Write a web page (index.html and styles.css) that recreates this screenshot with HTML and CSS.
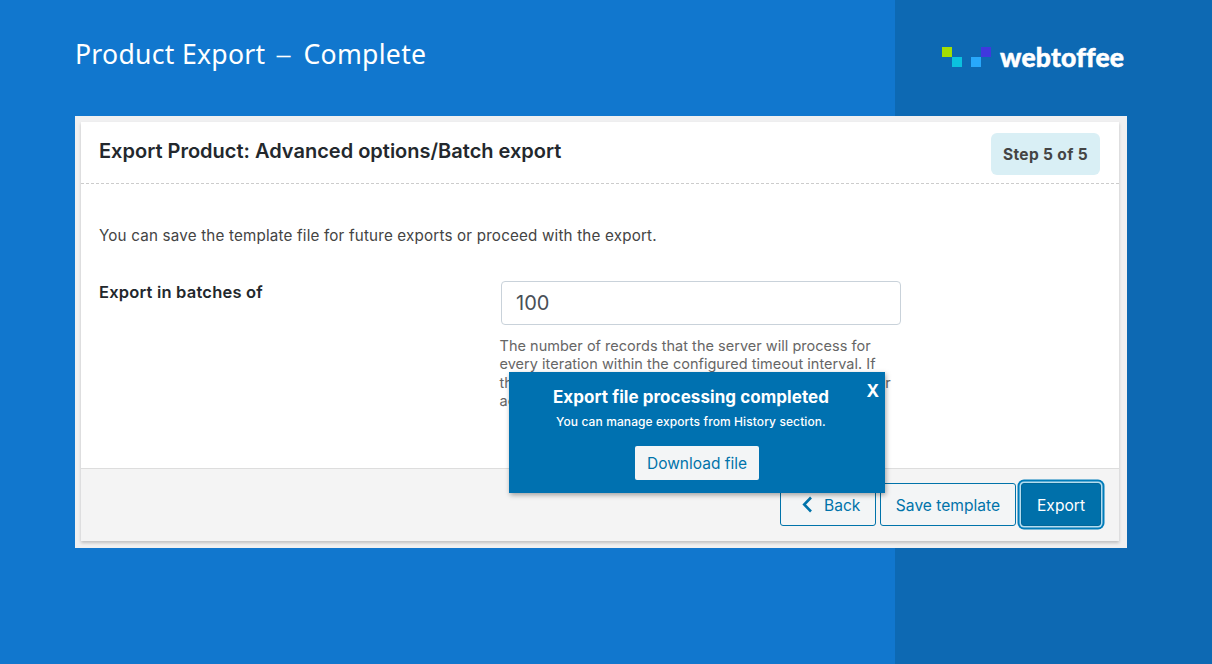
FILE: index.html
```html
<!DOCTYPE html>
<html lang="en">
<head>
<meta charset="utf-8">
<title>Product Export – Complete</title>
<link rel="stylesheet" href="styles.css">
</head>
<body>
<div class="stage">
  <header class="top">
    <h1 class="title">Product Export <span class="dash">–</span> Complete</h1>
    <div class="logo">
      <svg class="logo-mark" width="50" height="20" viewBox="0 0 50 20">
        <rect x="0" y="0" width="10" height="10" fill="#a4de02"/>
        <rect x="10" y="10" width="10" height="10" fill="#0bc1df"/>
        <rect x="29" y="10" width="10" height="10" fill="#28a8fb"/>
        <rect x="39" y="0" width="10" height="10" fill="#4038de"/>
      </svg>
      <span class="logo-name">webtoffee</span>
    </div>
  </header>
  <main class="frame">
    <section class="card">
      <div class="card-head">
        <h2 class="heading">Export Product: Advanced options/Batch export</h2>
        <span class="step">Step 5 of 5</span>
      </div>
      <div class="card-body">
        <p class="intro">You can save the template file for future exports or proceed with the export.</p>
        <div class="field">
          <label class="label" for="batch">Export in batches of</label>
          <div class="control">
            <input class="input" id="batch" type="text" value="100">
            <p class="help">The number of records that the server will process for<br>every iteration within the configured timeout interval. If<br>the export fails due to timeout you can lower this number<br>accordingly and try again.</p>
          </div>
        </div>
      </div>
      <footer class="card-foot">
        <button class="btn back"><svg width="12" height="20" viewBox="0 0 12 20"><path d="M10 1.500 3.200 8.500l6.800 7" fill="none" stroke="#0073aa" stroke-width="2.600"/></svg><span>Back</span></button>
        <button class="btn save">Save template</button>
        <button class="btn export">Export</button>
      </footer>
      <div class="popup">
        <span class="close">X</span>
        <h3 class="popup-title">Export file processing completed</h3>
        <p class="popup-text">You can manage exports from History section.</p>
        <button class="download">Download file</button>
      </div>
    </section>
  </main>
</div>
</body>
</html>
```
FILE: styles.css
```css
* { box-sizing: border-box; }
body { margin: 0; font-family: Inter, "Liberation Sans", sans-serif; }
h1, h2, h3, p { margin: 0; }
button { font-family: inherit; }
.stage {
  width: 1212px;
  height: 664px;
  overflow: hidden;
  padding: 0 85px 0 75px;
  background: linear-gradient(90deg, #1177ce 895px, #0d69b3 895px);
}
.top { display: flex; justify-content: space-between; height: 116px; }
.title {
  padding-top: 36px;
  font: 400 26.600px/37px "Noto Sans", sans-serif;
  letter-spacing: 0.280px;
  color: #fff;
  white-space: nowrap;
}
.dash { display: inline-block; font-weight: 300; margin: 0 5.500px 0 4.500px; transform: scaleX(1.250); }
.logo { display: flex; width: 185px; padding-top: 47px; gap: 8px; }
.logo-mark { flex: none; }
.logo-name {
  font: 900 26.500px/20px Lato, sans-serif;
  letter-spacing: 0.200px;
  -webkit-text-stroke: 0.500px #fff;
  color: #fff;
}
.frame { height: 432px; padding: 6px 8px 6px 6px; background: #f0f0f1; }
.card {
  position: relative;
  display: flex;
  flex-direction: column;
  height: 419px;
  background: #fff;
  box-shadow: 0 2px 3px rgba(0, 0, 0, 0.2);
}
.card-head {
  display: flex;
  justify-content: space-between;
  height: 62px;
  padding: 11px 19px 0 18px;
  border-bottom: 1px dashed #ccc;
}
.heading { font-size: 20px; line-height: 36px; font-weight: 600; color: #23282d; white-space: nowrap; }
.step {
  width: 109px;
  height: 42px;
  border-radius: 6px;
  background: #d9eff5;
  color: #444;
  font-size: 15.500px;
  letter-spacing: 0.350px;
  font-weight: 700;
  line-height: 43px;
  text-align: center;
}
.card-body { flex: 1; padding: 42px 18px 0; }
.intro { font-size: 15.200px; letter-spacing: 0.180px; line-height: 20px; color: #444; white-space: nowrap; }
.field { display: flex; margin-top: 35px; }
.label { width: 402px; padding-top: 1px; font-size: 16.500px; letter-spacing: 0.200px; line-height: 20px; font-weight: 600; color: #23282d; }
.control { width: 402px; }
.input {
  display: block;
  width: 400px;
  height: 44px;
  padding: 0 14px;
  border: 1px solid #c9d2da;
  border-radius: 4px;
  font: 400 20px Inter, sans-serif;
  color: #495057;
}
.help { margin: 12px 0 0 -1.500px; font-size: 14.500px; letter-spacing: 0.020px; line-height: 18.300px; color: #666; white-space: nowrap; }
.card-foot {
  display: flex;
  justify-content: flex-end;
  gap: 4px;
  height: 73px;
  padding: 14px 18px 0 0;
  border-top: 1px solid #ddd;
  background: #f4f4f4;
}
.btn {
  height: 43px;
  padding: 2px 0 0;
  border: 1px solid #0073aa;
  border-radius: 3px;
  background: #f3f5f6;
  color: #0073aa;
  font-size: 15.600px;
  white-space: nowrap;
}
.back { display: flex; width: 96px; align-items: center; padding-left: 20px; gap: 11px; }
.save { width: 136px; }
.export {
  width: 80px;
  margin: 0 0 0 1px;
  border-color: #006799;
  background: #0070aa;
  color: #fff;
  box-shadow: 0 0 0 1.500px #b5dcef, 0 0 0 3.500px #007cba;
}
.popup {
  position: absolute;
  left: 428px;
  top: 250px;
  width: 376px;
  height: 121px;
  padding: 15px 12px 0 0;
  background: #0071b0;
  box-shadow: 1px 2px 5px rgba(0, 0, 0, 0.35);
  color: #fff;
  text-align: center;
}
.popup-title { font-size: 17px; letter-spacing: 0.060px; font-weight: 700; line-height: 20px; white-space: nowrap; }
.popup-text { margin-top: 6px; font-size: 12px; letter-spacing: 0.100px; font-weight: 500; line-height: 18px; white-space: nowrap; }
.close { position: absolute; right: 6px; top: 9px; font-size: 17px; font-weight: 700; line-height: 20px; }
.download {
  width: 124px;
  height: 34px;
  margin: 15px 0 0 12px;
  padding: 1px 0 0;
  border: 0;
  border-radius: 2px;
  background: #f3f5f6;
  color: #0073aa;
  font-size: 15.500px;
}
```
